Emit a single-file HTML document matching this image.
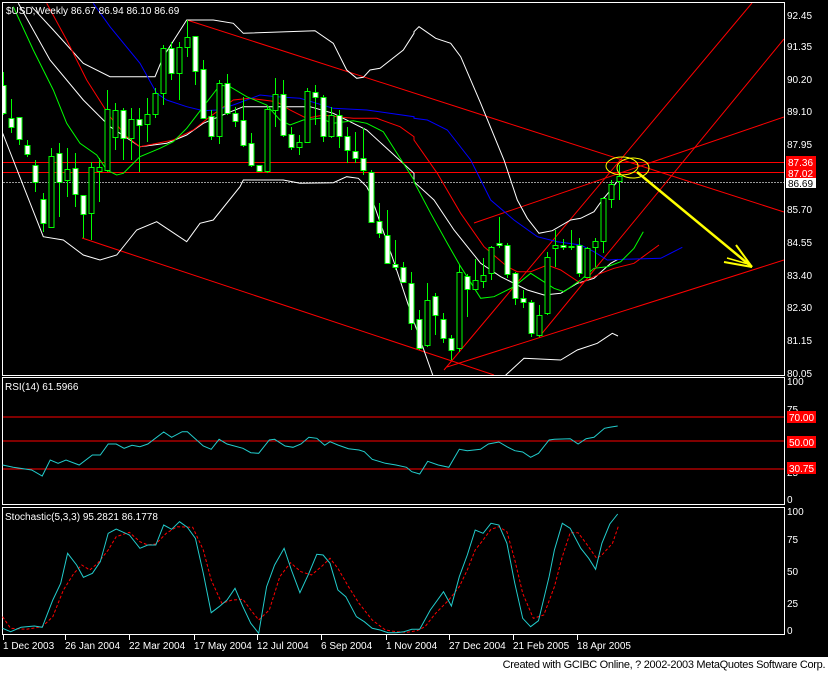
<!DOCTYPE html>
<html><head><meta charset="utf-8"><style>
html,body{margin:0;padding:0;background:#000;width:828px;height:673px;overflow:hidden}
svg{display:block}
text{font-family:"Liberation Sans",sans-serif;font-size:10px;fill:#fff}
.foot{position:absolute;left:0;top:657px;width:828px;height:16px;background:#fff;color:#000;font:11px "Liberation Sans",sans-serif;text-align:right;line-height:16px;letter-spacing:-0.3px}
</style></head><body>
<svg id="s" width="828" height="657" xmlns="http://www.w3.org/2000/svg">
<rect width="828" height="657" fill="#000"/>
<rect x="2.5" y="2.5" width="782" height="373" fill="none" stroke="#fff"/>
<rect x="2.5" y="377.5" width="782" height="127" fill="none" stroke="#fff"/>
<rect x="2.5" y="507.5" width="782" height="127" fill="none" stroke="#fff"/>
<g id="g"></g>
<text x="6" y="14">$USD,Weekly  86.67 86.94 86.10 86.69</text>
<g>
<text x="787" y="19">92.45</text><text x="787" y="50">91.35</text><text x="787" y="83">90.20</text>
<text x="787" y="115">89.10</text><text x="787" y="148">87.95</text><text x="787" y="213">85.70</text>
<text x="787" y="246">84.55</text><text x="787" y="279">83.40</text><text x="787" y="311">82.30</text>
<text x="787" y="344">81.15</text><text x="787" y="377">80.05</text>
<rect x="786" y="156" width="30" height="12" fill="#f00"/><text x="788" y="166" fill="#000">87.36</text>
<rect x="786" y="168" width="30" height="10" fill="#f00"/><text x="788" y="177" fill="#000">87.02</text>
<rect x="786" y="178" width="30" height="10" fill="#fff"/><text x="788" y="187" style="fill:#000">86.69</text>
</g>
<text x="5" y="390">RSI(14)  61.5966</text>
<text x="787" y="385">100</text><text x="787" y="413">75</text><text x="787" y="445">50</text><text x="787" y="476">25</text><text x="787" y="503">0</text>
<rect x="787" y="411" width="29" height="12" fill="#f00"/><text x="789" y="421" fill="#000">70.00</text>
<rect x="787" y="436" width="29" height="12" fill="#f00"/><text x="789" y="446" fill="#000">50.00</text>
<rect x="787" y="462" width="29" height="12" fill="#f00"/><text x="789" y="472" fill="#000">30.75</text>
<text x="5" y="520">Stochastic(5,3,3)  95.2821  86.1778</text>
<text x="787" y="515">100</text><text x="787" y="543">75</text><text x="787" y="575">50</text><text x="787" y="607">25</text><text x="787" y="634">0</text>
<g>
<text x="3" y="649">1 Dec 2003</text><text x="65" y="649">26 Jan 2004</text><text x="129" y="649">22 Mar 2004</text>
<text x="194" y="649">17 May 2004</text><text x="257" y="649">12 Jul 2004</text><text x="321" y="649">6 Sep 2004</text>
<text x="386" y="649">1 Nov 2004</text><text x="449" y="649">27 Dec 2004</text><text x="513" y="649">21 Feb 2005</text>
<text x="577" y="649">18 Apr 2005</text>
</g>
</svg>
<div class="foot">Created with GCIBC Online, ? 2002-2003 MetaQuotes Software Corp.&nbsp;</div>
<script>
var NS="http://www.w3.org/2000/svg",g=document.getElementById("g");
function el(t,a){var e=document.createElementNS(NS,t);for(var k in a)e.setAttribute(k,a[k]);g.appendChild(e);return e}
function line(x1,y1,x2,y2,c,w,extra){var a={x1:x1,y1:y1,x2:x2,y2:y2,stroke:c,"stroke-width":w||1};if(extra)for(var k in extra)a[k]=extra[k];el("line",a)}
function poly(pts,c,extra){var a={points:pts.map(function(p){return p[0].toFixed(1)+","+p[1].toFixed(1)}).join(" "),fill:"none",stroke:c,"stroke-width":1};if(extra)for(var k in extra)a[k]=extra[k];el("polyline",a)}
function z1(a){return a.map(function(p){return[p[0]/3,p[1]/3]})}
function z2(a){return a.map(function(p){return[p[0]/3+414,p[1]/3]})}
function z3(a){return a.map(function(p){return[p[0]/1.894,p[1]/3+370]})}
var cp=el("clipPath",{id:"cm"});var r=document.createElementNS(NS,"rect");r.setAttribute("x",3);r.setAttribute("y",3);r.setAttribute("width",781);r.setAttribute("height",372);cp.appendChild(r);
var mg=document.createElementNS(NS,"g");mg.setAttribute("clip-path","url(#cm)");g.appendChild(mg);
var G=g;g=mg;
line(3,182.5,784,182.5,"#999",1,{"stroke-dasharray":"2,1"});
line(3,162.5,784,162.5,"#f00");line(3,172.5,784,172.5,"#f00");
line(187,20,784,212,"#f00");line(82,238,494,375,"#f00");
line(444,370,752,3,"#f00");line(539,337,784,39,"#f00");
line(474,223,784,117,"#f00");line(447,367,784,260,"#f00");
poly(z1([[95,20],[160,90],[250,190],[330,230],[410,230],[465,230],[490,170],[560,60],[640,60],[700,70],[730,100],[945,92],[1000,130],[1040,210],[1070,235],[1090,232],[1110,210],[1140,205],[1210,150],[1242,100]]).concat(z2([[0,95],[15,80],[65,115],[110,130],[140,170],[200,310],[270,480],[310,600],[340,655],[375,700],[415,692],[470,660],[500,655],[540,635],[565,600],[590,570],[620,530]])),"#fff");
poly(z1([[8,400],[130,710],[190,720],[250,765],[300,780],[350,765],[410,690],[470,665],[560,725],[600,670],[640,660],[720,560],[730,540],[850,540],[900,550],[1000,548],[1040,530],[1075,535],[1100,560],[1110,580],[1180,780],[1240,960],[1300,1130]]),"#fff");
poly(z2([[270,1130],[330,1075],[440,1080],[490,1050],[550,1030],[595,1000],[612,1008]]),"#fff");
poly(z1([[55,10],[150,180],[250,300],[330,380],[420,440],[500,430],[560,405],[610,370],[680,340],[730,320],[850,320],[930,320],[1000,340],[1060,370],[1100,390],[1242,520]]).concat(z2([[0,545],[60,600],[120,690],[200,790],[260,830],[340,870],[390,885],[440,880],[490,850],[540,835],[590,790],[612,778]])),"#fff");
poly(z1([[140,10],[200,120],[260,240],[330,350],[380,410],[420,440],[520,420],[580,390],[630,350],[700,300],[750,295],[830,305],[870,330],[920,355],[970,345],[1010,350],[1060,355],[1130,355],[1200,380],[1242,410]]).concat(z2([[0,420],[70,520],[140,640],[210,740],[280,800],[310,815],[350,815],[400,795],[440,810],[500,850],[560,820],[600,805],[660,790],[735,735]])),"#f00");
poly(z1([[280,10],[330,80],[420,190],[470,280],[500,300],[560,320],[610,332],[650,330],[700,315],[780,285],[830,290],[900,295],[950,310],[1000,325],[1100,330],[1242,350]]).concat(z2([[0,355],[40,360],[100,390],[170,480],[230,600],[300,660],[370,710],[430,725],[500,735],[540,755],[580,780],[630,778],[740,775],[805,742]])),"#00f");
poly(z1([[40,20],[100,150],[160,270],[200,370],[240,430],[290,465],[320,510],[350,525],[370,520],[420,470],[480,445],[520,425],[560,385],[610,320],[660,255],[690,260],[740,290],[800,315],[840,360],[870,375],[910,360],[960,355],[1000,370],[1060,362],[1100,370],[1150,395],[1242,540]]).concat(z2([[0,545],[50,640],[100,730],[140,800],[200,895],[240,890],[300,860],[350,820],[420,865],[450,875],[500,840],[540,805],[580,800],[620,785],[660,745],[688,695]])),"#0f0");
var C=[[85,113,72,115,1],[118,127,99,133,1],[117,139,117,145,1],[145,154,140,157,1],[165,182,160,192,1],[199,223,193,232,1],[156,227,148,228,0],[153,182,143,217,1],[169,180,148,197,0],[168,194,153,207,1],[195,214,195,238,1],[167,213,162,240,0],[167,171,158,202,0],[109,170,90,172,0],[110,137,103,150,0],[110,138,108,160,1],[119,138,108,160,0],[119,125,108,172,1],[114,124,98,142,0],[93,114,88,118,0],[48,93,45,105,0],[48,73,42,80,1],[47,73,42,100,0],[37,47,20,57,0],[36,71,36,85,1],[69,118,60,118,1],[116,136,110,140,1],[83,136,80,144,0],[83,113,74,115,1],[113,121,107,127,1],[120,145,97,147,1],[143,165,133,167,1],[165,171,165,172,1],[109,171,106,173,0],[94,110,78,127,0],[94,135,80,137,1],[134,147,127,150,1],[142,147,135,155,0],[91,142,88,142,0],[92,97,85,125,1],[97,136,95,142,1],[115,136,107,138,0],[115,136,110,148,1],[136,150,127,163,1],[151,158,132,163,1],[158,170,128,175,1],[172,222,170,223,1],[221,233,203,238,1],[235,263,210,263,1],[264,267,240,270,1],[267,282,262,283,1],[283,323,272,330,1],[319,348,310,350,1],[300,345,283,347,0],[296,315,293,335,1],[319,338,313,343,1],[338,350,335,360,1],[272,348,265,352,0],[276,289,274,317,1],[280,289,259,290,0],[275,281,258,288,0],[247,273,246,280,0],[243,245,217,248,1],[245,274,243,278,1],[273,298,272,305,1],[298,302,290,308,1],[302,333,300,337,1],[315,335,305,337,0],[257,313,252,315,0],[245,248,230,267,0],[245,247,239,250,1],[246,247,230,250,0],[245,273,238,277,1],[248,277,247,277,0],[241,247,238,267,0],[198,241,197,253,0],[184,199,180,208,0],[176,181,165,200,0]];
C.forEach(function(c,i){var x=3+8*i;line(x+.5,c[2],x+.5,c[3],"#0f0");var h=Math.max(c[1]-c[0],1);el("rect",{x:x-2,y:c[0]+.5,width:5,height:h,fill:c[4]?"#fff":"#000",stroke:"#0f0","stroke-width":1})});
el("ellipse",{cx:622,cy:166,rx:16,ry:9,fill:"none",stroke:"#ff0","stroke-width":1});
el("ellipse",{cx:633,cy:168,rx:16,ry:10,fill:"none",stroke:"#ff0","stroke-width":1});
line(637,172,752,267,"#ff0",2.5);line(724,262,752,267,"#ff0",2);line(736,245,752,267,"#ff0",2);line(727,258,748,264,"#ff0",1.5);
g=G;
line(3,417,784,417,"#f00");line(3,441,784,441,"#f00");line(3,469,784,469,"#f00");
poly(z3([[5,285],[25,292],[60,300],[80,318],[95,270],[110,280],[125,270],[150,285],[175,255],[190,255],[205,222],[220,222],[235,235],[250,226],[265,230],[280,222],[310,186],[325,202],[345,185],[355,185],[385,228],[400,238],[415,208],[430,222],[460,235],[475,248],[490,250],[510,210],[520,208],[540,228],[555,232],[570,222],[585,202],[600,205],[615,226],[625,215],[640,225],[660,236],[680,240],[690,245],[705,268],[730,280],[750,285],[770,292],[780,305],[795,312],[810,274],[830,285],[850,292],[870,238],[885,242],[910,238],[925,222],[945,216],[960,230],[975,242],[990,246],[1005,262],[1020,250],[1040,210],[1050,208],[1080,206],[1095,222],[1110,206],[1125,202],[1145,175],[1155,172],[1170,168]]),"#2cc");
poly(z3([[5,740],[20,775],[50,778],[80,770],[100,740],[120,660],[140,610],[155,585],[170,600],[185,580],[205,540],[220,500],[245,487],[265,515],[280,525],[295,522],[315,490],[335,470],[365,472],[385,540],[400,630],[420,700],[440,690],[460,688],[475,720],[490,750],[510,720],[530,620],[550,578],[570,605],[590,615],[610,588],[625,565],[640,595],[660,650],[680,700],[705,750],[730,780],[750,785],[770,787],[790,782],[805,770],[825,730],[850,690],[870,650],[885,600],[900,540],[915,510],[930,478],[945,470],[960,485],[975,570],[990,670],[1010,745],[1030,735],[1050,650],[1065,560],[1080,488],[1095,488],[1110,520],[1130,565],[1140,555],[1160,520],[1172,465]]),"#f00",{"stroke-dasharray":"3,2"});
poly(z3([[5,775],[20,785],[40,772],[65,768],[80,772],[100,690],[115,640],[128,550],[145,585],[158,622],[175,610],[190,575],[205,490],[220,477],[245,495],[265,535],[280,525],[295,525],[310,465],[325,478],[340,455],[355,472],[370,505],[385,610],[400,728],[415,710],[430,690],[445,655],[460,710],[475,760],[490,790],[505,650],[520,585],[538,535],[552,600],[568,668],[585,610],[600,553],[612,555],[625,580],[640,660],[655,680],[675,740],[690,755],[705,775],[720,780],[735,788],[750,788],[765,785],[780,778],[795,778],[815,720],[840,665],[855,708],[870,620],[885,555],[900,480],[915,490],[930,460],[945,465],[960,520],[975,640],[990,745],[1005,770],[1020,752],[1040,620],[1050,540],[1065,460],[1080,475],[1100,535],[1115,565],[1128,598],[1140,520],[1155,462],[1170,432]]),"#2cc");
[3,65,129,194,257,321,386,449,513,577].forEach(function(x){line(x+.5,635,x+.5,640,"#fff")});
</script>
</body></html>
